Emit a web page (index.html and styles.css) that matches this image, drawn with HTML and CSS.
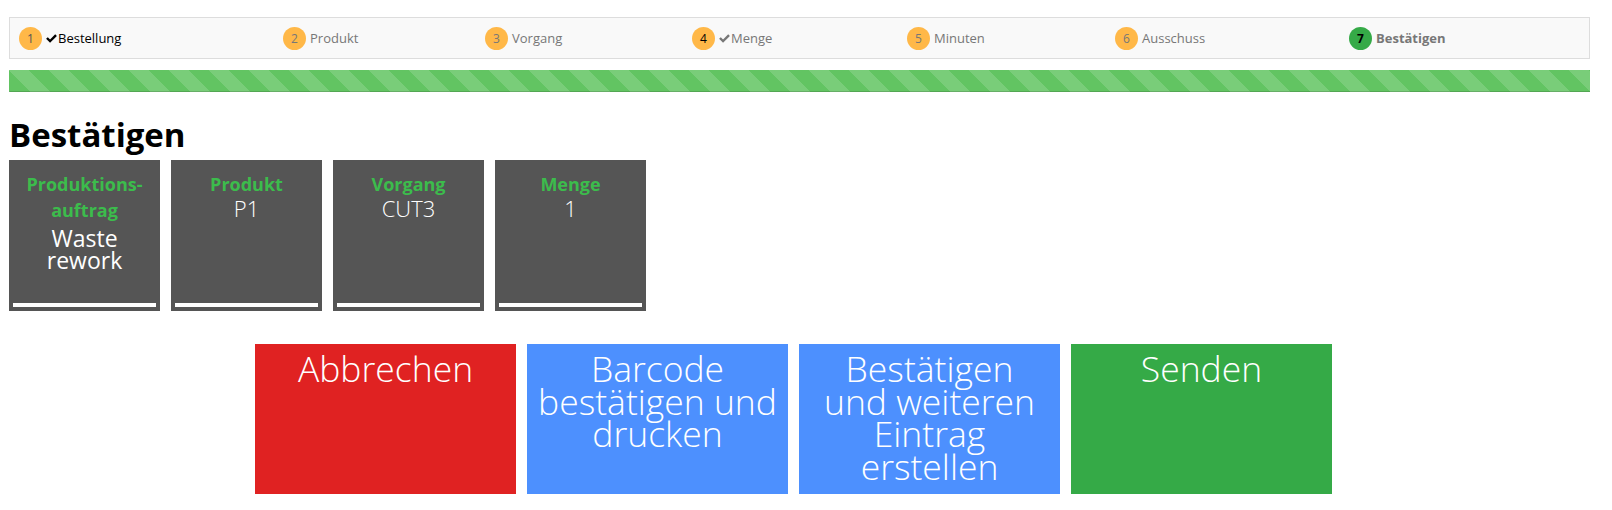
FILE: index.html
```html
<!DOCTYPE html>
<html lang="de">
<head>
<meta charset="utf-8">
<title>Bestätigen</title>
<link rel="stylesheet" href="styles.css">
</head>
<body>
<div class="page">
  <div class="steps">
    <div class="step step-1 done-dark"><span class="num">1</span><svg class="check" viewBox="0 0 12 10"><path d="M0 5.4 L1.9 3.5 L4.4 6 L10.1 0.3 L12 2.2 L4.4 9.8 Z"/></svg><span class="label">Bestellung</span></div>
    <div class="step step-2"><span class="num">2</span><span class="label">Produkt</span></div>
    <div class="step step-3"><span class="num">3</span><span class="label">Vorgang</span></div>
    <div class="step step-4 done-gray"><span class="num">4</span><svg class="check" viewBox="0 0 12 10"><path d="M0 5.4 L1.9 3.5 L4.4 6 L10.1 0.3 L12 2.2 L4.4 9.8 Z"/></svg><span class="label">Menge</span></div>
    <div class="step step-5"><span class="num">5</span><span class="label">Minuten</span></div>
    <div class="step step-6"><span class="num">6</span><span class="label">Ausschuss</span></div>
    <div class="step step-7 current"><span class="num">7</span><span class="label">Bestätigen</span></div>
  </div>
  <div class="progress"><div class="bar"></div></div>

  <h1 class="title">Bestätigen</h1>

  <div class="cards">
    <div class="card">
      <div class="card-label">Produktions-<br>auftrag</div>
      <div class="card-value wide">Waste<br>rework</div>
      <div class="card-line"></div>
    </div>
    <div class="card">
      <div class="card-label">Produkt</div>
      <div class="card-value">P1</div>
      <div class="card-line"></div>
    </div>
    <div class="card">
      <div class="card-label">Vorgang</div>
      <div class="card-value">CUT3</div>
      <div class="card-line"></div>
    </div>
    <div class="card">
      <div class="card-label">Menge</div>
      <div class="card-value">1</div>
      <div class="card-line"></div>
    </div>
  </div>

  <div class="actions">
    <div class="action red">Abbrechen</div>
    <div class="action blue">Barcode bestätigen und drucken</div>
    <div class="action blue">Bestätigen und&nbsp;weiteren Eintrag erstellen</div>
    <div class="action green">Senden</div>
  </div>
</div>
</body>
</html>
```

FILE: styles.css
```css
* { box-sizing: border-box; }
html, body { margin: 0; padding: 0; background: #fff; }
body { font-family: "Open Sans", "DejaVu Sans", sans-serif; color: #000; }

.page { padding: 17px 0 0 9px; width: 1590px; }

.steps {
  display: flex;
  align-items: center;
  height: 42px;
  background: #f9f9f9;
  border: 1px solid #ddd;
  padding-left: 9px;
}
.step { display: flex; align-items: center; font-size: 13px; color: #777; }
.step-1 { width: 264px; }
.step-2 { width: 202px; }
.step-3 { width: 207px; }
.step-4 { width: 215px; }
.step-5 { width: 208px; }
.step-6 { width: 234px; }
.step-7 { flex: 1; }

.num {
  width: 23px; height: 23px; border-radius: 50%;
  background: #ffb848; color: #777;
  font-size: 12px; line-height: 23px; text-align: center;
  margin-right: 4px;
}
.step-1 .num { color: #555; }
.check { width: 11px; height: 9px; margin-right: 1px; }
.done-dark .check { fill: #000; }
.done-dark .label { color: #000; }
.done-gray .check { fill: #777; }
.done-gray .num { color: #000; }
.current .num { background: #35aa47; color: #000; font-weight: 700; }
.current .label { font-weight: 700; color: #777; }

.progress { margin-top: 11px; height: 22px; background: #f7f7f7; }
.progress .bar {
  height: 100%;
  width: 100%;
  background-color: #62c462;
  background-image: linear-gradient(45deg, rgba(255,255,255,.15) 25%, transparent 25%, transparent 50%, rgba(255,255,255,.15) 50%, rgba(255,255,255,.15) 75%, transparent 75%, transparent);
  background-size: 40px 40px;
  box-shadow: inset 0 -1px 0 rgba(0,0,0,.15);
}

.title { font-size: 33px; font-weight: 700; line-height: 36px; margin: 25px 0 7px 0; }

.cards { display: flex; gap: 11px; }
.card {
  width: 151px; height: 151px; background: #555;
  display: flex; flex-direction: column; align-items: center;
  padding-top: 11px; text-align: center;
}
.card-label { color: #3cbc4c; font-weight: 700; font-size: 18px; line-height: 26px; }
.card-value { color: #fff; font-size: 22px; font-weight: 300; line-height: 22px; }
.card-value.wide { font-size: 23px; font-weight: 400; line-height: 22px; margin-top: 4px; }
.card-line { margin-top: auto; margin-bottom: 4px; width: 143px; height: 4px; background: #fff; }

.actions { display: flex; gap: 11px; margin: 33px 0 0 246px; }
.action {
  width: 261px; height: 150px; color: #fff;
  font-size: 35.5px; font-weight: 300; line-height: 32.5px;
  text-align: center; padding: 8px 8px 0;
}
.red { background: #e02222; }
.blue { background: #4d90fe; }
.green { background: #35aa47; }
```
